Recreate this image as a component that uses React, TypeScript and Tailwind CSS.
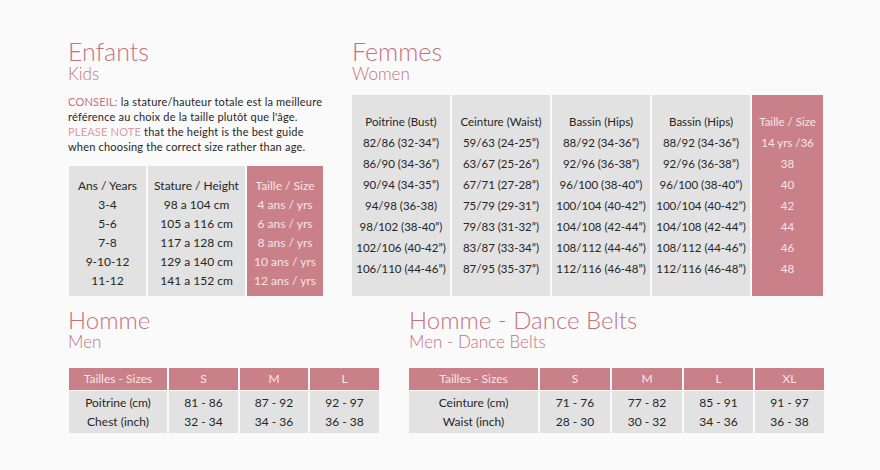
import React from "react";

const PINK_BG = "bg-[#c98089]";
const GRAY_BG = "bg-[#e2e2e2]";

function Heading({ title, sub, big = "text-[25px]" }: { title: string; sub: string; big?: string }) {
  return (
    <div>
      <div className={`${big} leading-none font-light text-[#c4737d]`}>{title}</div>
      <div className="text-[17px] leading-none mt-px font-light text-[#c4737d]">{sub}</div>
    </div>
  );
}

function Col({ w, pink, lines, pt, pb, lh, fs = "text-[12px]" }: { w: string; pink?: boolean; lines: string[]; pt: string; pb: string; lh: string; fs?: string }) {
  return (
    <div className={`${w} ${pink ? PINK_BG + " text-[#f8e4e7]" : GRAY_BG + " text-[#262626]"} ${pt} ${pb} text-center ${fs}`}>
      {lines.map((l, i) => (
        <div key={i} className={`${lh} whitespace-nowrap`}>{l}</div>
      ))}
    </div>
  );
}

function MenTable({ widths, headers, rows }: { widths: string[]; headers: string[]; rows: string[][] }) {
  return (
    <div className="flex gap-[2px]">
      {headers.map((h, i) => (
        <div key={i} className={`${widths[i]} flex flex-col gap-px text-center text-[12px]`}>
          <div className={`${PINK_BG} text-[#f8e4e7] h-[22px] leading-[22px]`}>{h}</div>
          <div className={`${GRAY_BG} text-[#262626] pt-[2px] pb-[2px]`}>
            {rows.map((r, j) => (
              <div key={j} className="leading-[19px] whitespace-nowrap">{r[i]}</div>
            ))}
          </div>
        </div>
      ))}
    </div>
  );
}

const q = "\u201D";

export default function App() {
  return (
    <div
      className="w-[880px] h-[470px] bg-[#fafafa] pt-[39px] pl-[68px] overflow-hidden"
      style={{ fontFamily: "Lato, 'Open Sans', sans-serif" }}
    >
      <div className="flex gap-[29px]">
        <div className="w-[255px]">
          <Heading title="Enfants" sub="Kids" />
          <p className="mt-[12px] text-[11px] leading-[15px] tracking-[0.2px] text-[#262626] whitespace-nowrap">
            <span className="text-[#c4737d]">CONSEIL:</span> la stature/hauteur totale est la meilleure
            <br />
            référence au choix de la taille plutôt que l'âge.
            <br />
            <span className="text-[#d9a0a6]">PLEASE NOTE</span> that the height is the best guide
            <br />
            when choosing the correct size rather than age.
          </p>
          <div className="mt-[12px] ml-px flex gap-[2px]">
            <Col w="w-[77px]" pt="pt-[10px]" pb="pb-[6px]" lh="leading-[19px]" lines={["Ans / Years", "3-4", "5-6", "7-8", "9-10-12", "11-12"]} />
            <Col w="w-[97px]" pt="pt-[10px]" pb="pb-[6px]" lh="leading-[19px]" lines={["Stature / Height", "98 a 104 cm", "105 a 116 cm", "117 a 128 cm", "129 a 140 cm", "141 a 152 cm"]} />
            <Col w="w-[76px]" pink pt="pt-[10px]" pb="pb-[6px]" lh="leading-[19px]" lines={["Taille / Size", "4 ans / yrs", "6 ans / yrs", "8 ans / yrs", "10 ans / yrs", "12 ans / yrs"]} />
          </div>
        </div>
        <div className="w-[471px]">
          <Heading title="Femmes" sub="Women" />
          <div className="mt-[13px] flex gap-[2px]">
            <Col w="w-[98px]" fs="text-[11.5px]" pt="pt-[16px]" pb="pb-[17px]" lh="leading-[21px]" lines={["Poitrine (Bust)", `82/86 (32-34${q})`, `86/90 (34-36${q})`, `90/94 (34-35${q})`, "94/98 (36-38)", `98/102 (38-40${q})`, `102/106 (40-42${q})`, `106/110 (44-46${q})`]} />
            <Col w="w-[98px]" fs="text-[11.5px]" pt="pt-[16px]" pb="pb-[17px]" lh="leading-[21px]" lines={["Ceinture (Waist)", `59/63 (24-25${q})`, `63/67 (25-26${q})`, `67/71 (27-28${q})`, `75/79 (29-31${q})`, `79/83 (31-32${q})`, `83/87 (33-34${q})`, `87/95 (35-37${q})`]} />
            <Col w="w-[98px]" fs="text-[11.5px]" pt="pt-[16px]" pb="pb-[17px]" lh="leading-[21px]" lines={["Bassin (Hips)", `88/92 (34-36${q})`, `92/96 (36-38${q})`, `96/100 (38-40${q})`, `100/104 (40-42${q})`, `104/108 (42-44${q})`, `108/112 (44-46${q})`, `112/116 (46-48${q})`]} />
            <Col w="w-[98px]" fs="text-[11.5px]" pt="pt-[16px]" pb="pb-[17px]" lh="leading-[21px]" lines={["Bassin (Hips)", `88/92 (34-36${q})`, `92/96 (36-38${q})`, `96/100 (38-40${q})`, `100/104 (40-42${q})`, `104/108 (42-44${q})`, `108/112 (44-46${q})`, `112/116 (46-48${q})`]} />
            <Col w="w-[71px]" fs="text-[11.5px]" pink pt="pt-[16px]" pb="pb-[17px]" lh="leading-[21px]" lines={["Taille / Size", "14 yrs /36", "38", "40", "42", "44", "46", "48"]} />
          </div>
        </div>
      </div>

      <div className="mt-[12px] flex gap-[29px]">
        <div className="w-[312px]">
          <Heading title="Homme" sub="Men" big="text-[24px]" />
          <div className="mt-[18px] ml-px">
            <MenTable
              widths={["w-[98px]", "w-[69px]", "w-[68px]", "w-[69px]"]}
              headers={["Tailles - Sizes", "S", "M", "L"]}
              rows={[
                ["Poitrine (cm)", "81 - 86", "87 - 92", "92 - 97"],
                ["Chest (inch)", "32 - 34", "34 - 36", "36 - 38"],
              ]}
            />
          </div>
        </div>
        <div className="w-[415px]">
          <Heading title="Homme - Dance Belts" sub="Men - Dance Belts" big="text-[24px]" />
          <div className="mt-[18px]">
            <MenTable
              widths={["w-[129px]", "w-[70px]", "w-[70px]", "w-[69px]", "w-[69px]"]}
              headers={["Tailles - Sizes", "S", "M", "L", "XL"]}
              rows={[
                ["Ceinture (cm)", "71 - 76", "77 - 82", "85 - 91", "91 - 97"],
                ["Waist (inch)", "28 - 30", "30 - 32", "34 - 36", "36 - 38"],
              ]}
            />
          </div>
        </div>
      </div>
    </div>
  );
}
